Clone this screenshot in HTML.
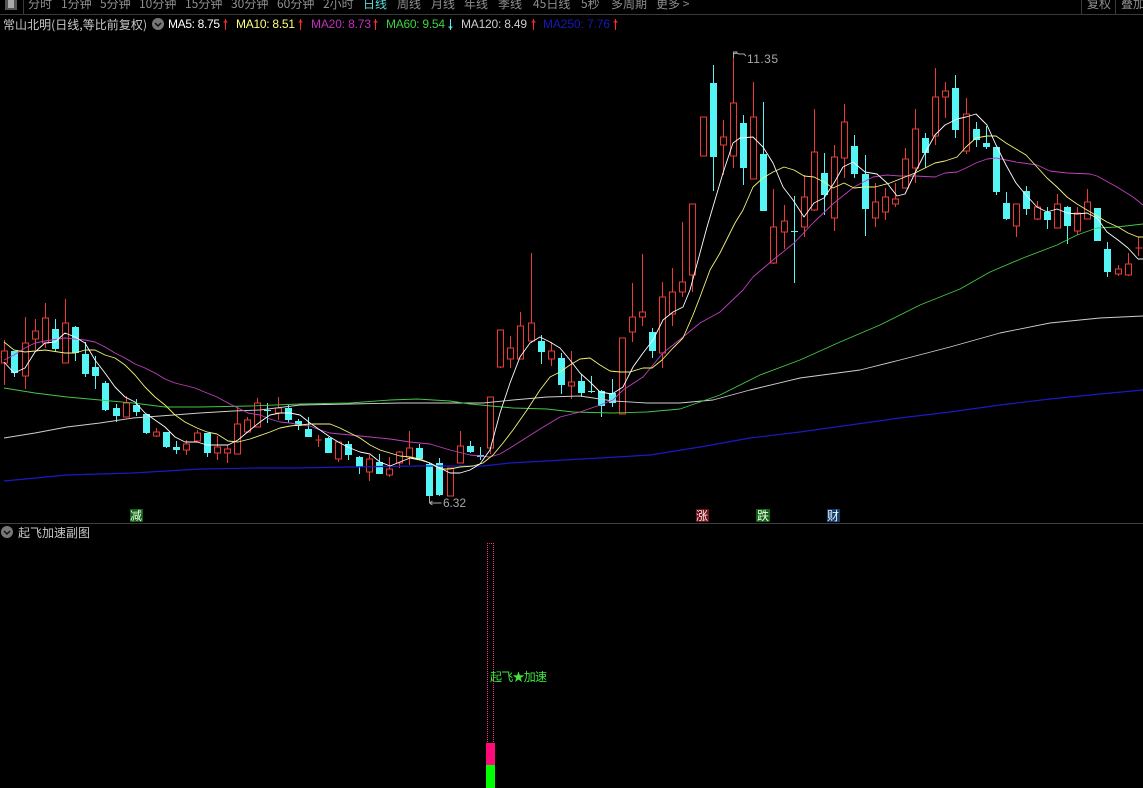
<!DOCTYPE html>
<html><head><meta charset="utf-8"><style>
html,body{margin:0;padding:0;background:#000;width:1143px;height:788px;overflow:hidden}
svg{display:block;position:absolute;left:0;top:0}
text{font-family:"Liberation Sans","WenQuanYi Zen Hei","Noto Sans CJK SC",sans-serif;font-size:12px}
.t{fill:#8f8f8f}
.z{font-family:"WenQuanYi Zen Hei","Noto Sans CJK SC",sans-serif}
</style></head><body>
<svg width="1143" height="788" viewBox="0 0 1143 788">
<rect width="1143" height="788" fill="#000"/>
<!-- top bar -->
<g shape-rendering="crispEdges">
<rect x="0" y="14" width="1143" height="1" fill="#3a3a3a"/>
<rect x="23" y="0" width="1" height="14" fill="#3a3a3a"/>
<rect x="1081" y="0" width="1" height="14" fill="#3a3a3a"/>
<rect x="1115" y="0" width="1" height="14" fill="#3a3a3a"/>
<rect x="5" y="0" width="12" height="10" fill="#555"/>
<rect x="8" y="0" width="6" height="8" fill="#aaa"/>
<rect x="0" y="523" width="1143" height="1" fill="#3f3f3f"/>
</g>
<g class="z">
<text class="t z" x="28" y="8">分时</text>
<text class="t z" x="61" y="8">1分钟</text>
<text class="t z" x="100" y="8">5分钟</text>
<text class="t z" x="139" y="8">10分钟</text>
<text class="t z" x="185" y="8">15分钟</text>
<text class="t z" x="231" y="8">30分钟</text>
<text class="t z" x="277" y="8">60分钟</text>
<text class="t z" x="323" y="8">2小时</text>
<text class="z" x="363" y="8" fill="#5fd8d8">日线</text>
<text class="t z" x="397" y="8">周线</text>
<text class="t z" x="431" y="8">月线</text>
<text class="t z" x="464" y="8">年线</text>
<text class="t z" x="498" y="8">季线</text>
<text class="t z" x="533" y="8">45日线</text>
<text class="t z" x="581" y="8">5秒</text>
<text class="t z" x="611" y="8">多周期</text>
<text class="t z" x="656" y="8">更多 &gt;</text>
<text class="t z" x="1087" y="8">复权</text>
<text class="t z" x="1121" y="8">叠加</text>
</g>
<!-- legend -->
<text class="z" x="3" y="29" fill="#c8c8c8" textLength="144">常山北明(日线,等比前复权)</text>
<circle cx="158" cy="24" r="6" fill="#777"/>
<path d="M155 23l3 3 3-3" fill="none" stroke="#111" stroke-width="1.5"/>
<text x="168" y="28" fill="#fff" textLength="52">MA5: 8.75</text>
<text x="236" y="28" fill="#ffff80" textLength="59">MA10: 8.51</text>
<text x="311" y="28" fill="#c030c0" textLength="60">MA20: 8.73</text>
<text x="386" y="28" fill="#40d040" textLength="59">MA60: 9.54</text>
<text x="461" y="28" fill="#cccccc" textLength="66">MA120: 8.49</text>
<text x="543" y="28" fill="#1818b8" textLength="67">MA250: 7.76</text>
<g fill="none" stroke-width="1" shape-rendering="crispEdges">
<path stroke="#ff2c2c" d="M225.500 19V30M223.500 22h4M224.500 21h2M300.500 19V30M298.500 22h4M299.500 21h2M375.500 19V30M373.500 22h4M374.500 21h2M533.500 19V30M531.500 22h4M532.500 21h2M615.500 19V30M613.500 22h4M614.500 21h2"/>
<path stroke="#60f0f0" d="M450.500 19V30M448.500 27h4M449.500 28h2"/>
</g>
<!-- candles -->
<g shape-rendering="crispEdges" fill="none" stroke-width="1">
<path stroke="#ee3a36" d="M4.500 340V351M4.500 363V385M1.500 351h6v12h-6zM25.500 317V343M25.500 376V389M22.500 343h6v33h-6zM35.500 319V331M35.500 339V350M32.500 331h6v8h-6zM45.500 303V318M45.500 343V348M42.500 318h6v25h-6zM65.500 299V323M62.500 323h6v40h-6zM126.500 396V403M123.500 403h6v14h-6zM156.500 428V432M156.500 436V437M153.500 432h6v4h-6zM186.500 440V444M186.500 450V455M183.500 444h6v6h-6zM197.500 430V433M197.500 441V442M194.500 433h6v8h-6zM217.500 436V447M217.500 453V460M214.500 447h6v6h-6zM227.500 445V449M227.500 453V463M224.500 449h6v4h-6zM237.500 407V424M234.500 424h6v30h-6zM247.500 417V420M247.500 432V433M244.500 420h6v12h-6zM257.500 398V403M254.500 403h6v24h-6zM278.500 397V408M278.500 413V420M275.500 408h6v5h-6zM338.500 459V462M335.500 442h6v17h-6zM369.500 455V459M369.500 472V481M366.500 459h6v13h-6zM389.500 457V469M389.500 475V477M386.500 469h6v6h-6zM399.500 451V452M399.500 463V468M396.500 452h6v11h-6zM409.500 431V448M409.500 457V465M406.500 448h6v9h-6zM447.500 468h6v28h-6zM460.500 431V446M457.500 446h6v17h-6zM490.500 448V454M487.500 397h6v51h-6zM500.500 367V368M497.500 330h6v37h-6zM510.500 336V348M510.500 359V368M507.500 348h6v11h-6zM520.500 312V326M517.500 326h6v33h-6zM531.500 253V323M531.500 341V343M528.500 323h6v18h-6zM551.500 342V351M551.500 359V366M548.500 351h6v8h-6zM571.500 351V382M571.500 386V399M568.500 382h6v4h-6zM619.500 338h6v76h-6zM632.500 283V317M632.500 332V342M629.500 317h6v15h-6zM642.500 254V312M642.500 317V326M639.500 312h6v5h-6zM662.500 282V297M662.500 353V368M659.500 297h6v56h-6zM672.500 268V292M672.500 314V326M669.500 292h6v22h-6zM682.500 222V282M682.500 292V297M679.500 282h6v10h-6zM692.500 275V292M689.500 204h6v71h-6zM700.500 117h6v39h-6zM723.500 120V137M723.500 145V175M720.500 137h6v8h-6zM733.500 53V103M733.500 156V168M730.500 103h6v53h-6zM753.500 82V117M750.500 117h6v62h-6zM773.500 189V227M773.500 263V264M770.500 227h6v36h-6zM784.500 205V221M784.500 232V249M781.500 221h6v11h-6zM804.500 175V197M804.500 227V237M801.500 197h6v30h-6zM814.500 109V152M814.500 210V211M811.500 152h6v58h-6zM834.500 145V157M834.500 218V231M831.500 157h6v61h-6zM844.500 104V122M844.500 158V178M841.500 122h6v36h-6zM875.500 183V202M875.500 218V227M872.500 202h6v16h-6zM885.500 188V197M885.500 212V220M882.500 197h6v15h-6zM895.500 183V199M895.500 204V207M892.500 199h6v5h-6zM905.500 148V159M902.500 159h6v29h-6zM915.500 109V129M915.500 168V183M912.500 129h6v39h-6zM935.500 68V97M935.500 136V145M932.500 97h6v39h-6zM945.500 82V91M945.500 97V118M942.500 91h6v6h-6zM966.500 98V114M966.500 151V154M963.500 114h6v37h-6zM1016.500 226V237M1013.500 204h6v22h-6zM1037.500 201V207M1037.500 219V220M1034.500 207h6v12h-6zM1057.500 194V204M1054.500 204h6v24h-6zM1077.500 207V213M1077.500 231V235M1074.500 213h6v18h-6zM1087.500 189V202M1084.500 202h6v17h-6zM1118.500 265V269M1118.500 274V276M1115.500 269h6v5h-6zM1128.500 253V264M1128.500 275V276M1125.500 264h6v11h-6zM1138.500 237V256M1135.500 248h7M318.500 435V447M315.500 440h6"/>
<path stroke="#55f5f5" d="M14.500 373V377M55.500 319V329M55.500 349V351M75.500 326V327M75.500 353V361M85.500 342V354M85.500 374V377M95.500 356V367M95.500 376V389M105.500 381V383M105.500 410V411M116.500 404V408M116.500 416V422M136.500 399V405M136.500 412V416M146.500 433V434M166.500 447V448M176.500 441V447M176.500 450V454M207.500 453V457M288.500 405V408M288.500 420V423M298.500 419V421M298.500 426V430M308.500 417V429M328.500 437V438M348.500 441V444M348.500 455V460M359.500 456V457M359.500 467V474M379.500 454V462M419.500 444V448M419.500 459V460M429.500 463V464M429.500 496V500M439.500 458V463M439.500 495V496M470.500 441V446M470.500 452V453M541.500 335V341M541.500 352V364M561.500 353V358M561.500 385V394M581.500 374V381M581.500 393V397M601.500 390V391M601.500 406V417M612.500 379V393M612.500 403V407M652.500 328V332M652.500 351V358M713.500 65V83M713.500 157V191M743.500 115V123M743.500 168V185M763.500 102V154M824.500 153V173M824.500 195V215M854.500 135V146M854.500 174V178M865.500 155V174M865.500 209V236M925.500 133V138M925.500 153V168M955.500 75V88M955.500 130V138M976.500 122V129M976.500 140V147M986.500 126V143M986.500 147V149M996.500 192V195M1006.500 192V203M1006.500 219V220M1026.500 186V191M1026.500 209V215M1047.500 207V212M1047.500 220V229M1067.500 206V207M1067.500 226V244M1107.500 242V249M1107.500 272V277M267.500 403V423M264 410.500h7M480.500 447V460M591.500 376V393M588 391.500h7M794.500 196V283M791 231.500h7"/>
<path stroke="none" fill="#55f5f5" d="M11 351h7v22h-7zM52 329h7v20h-7zM72 327h7v26h-7zM82 354h7v20h-7zM92 367h7v9h-7zM102 383h7v27h-7zM113 408h7v8h-7zM133 405h7v7h-7zM143 414h7v19h-7zM163 432h7v15h-7zM173 447h7v3h-7zM204 433h7v20h-7zM285 408h7v12h-7zM295 421h7v5h-7zM305 429h7v8h-7zM325 438h7v15h-7zM345 444h7v11h-7zM356 457h7v10h-7zM376 462h7v12h-7zM416 448h7v11h-7zM426 464h7v32h-7zM436 463h7v32h-7zM467 446h7v6h-7zM477 455h7v2h-7zM538 341h7v11h-7zM558 358h7v27h-7zM578 381h7v12h-7zM598 391h7v15h-7zM609 393h7v10h-7zM649 332h7v19h-7zM710 83h7v74h-7zM740 123h7v45h-7zM760 154h7v57h-7zM821 173h7v22h-7zM851 146h7v28h-7zM862 174h7v35h-7zM922 138h7v15h-7zM952 88h7v42h-7zM973 129h7v11h-7zM983 143h7v4h-7zM993 147h7v45h-7zM1003 203h7v16h-7zM1023 191h7v18h-7zM1044 212h7v8h-7zM1064 207h7v19h-7zM1094 208h7v33h-7zM1104 249h7v23h-7z"/>
</g>
<!-- moving averages -->
<g fill="none" stroke-width="0.9" stroke-linejoin="round">
<polyline stroke="#1a1ac4" stroke-width="1.2" points="4,481 67,475 133,473 200,469 260,468 293,468 350,467 417,466 483,466 510,463 600,458 650,455 700,447 750,438 800,432 850,425 900,418 950,412 1000,405 1050,399 1100,394 1143,390"/>
<polyline stroke="#cfcfcf" points="4,438 35,433 67,427 100,423 133,418 160,416 200,413 233,411 260,410 300,405 350,404 400,403 450,403 483,403 513,400 547,397 580,396 613,401 647,403 680,403 713,400 750,390 800,378 860,370 900,360 950,347 1000,333 1050,323 1100,318 1143,316"/>
<polyline stroke="#45c845" points="4,388 35,393 67,397 100,400 133,403 165,407 200,407 250,406 300,404 350,403 390,400 417,399 450,401 470,404 513,408 547,409 573,412 613,413 647,412 680,409 700,402 720,395 760,375 800,360 840,342 880,325 920,305 960,289 990,272 1023,258 1057,245 1077,235 1097,228 1117,227 1143,224"/>
<polyline stroke="#c040c0" points="4,360 14,355 25,348 35,343 45,341 65,338 85,340 95,342 105,347 115,353 125,358 135,364 145,368 155,373 165,379 175,383 195,388 207,393 217,397 228,403 238,408 248,413 260,415 270,419 280,422 290,423 300,425 310,426 320,430 330,433 350,435 370,437 390,439 410,442 430,444 450,450 470,455 490,457 500,454 510,448 540,429 560,417 580,412 600,405 613,400 623,390 643,377 663,353 683,337 700,323 720,312 743,290 753,277 773,260 794,243 814,222 834,203 854,187 873,177 887,175 900,176 915,176 935,177 945,173 957,172 966,168 976,163 987,159 996,158 1016,162 1037,165 1050,171 1067,173 1090,174 1097,176 1117,187 1133,197 1143,205"/>
<polyline stroke="#f4f478" points="4,342 14,350 25,352 45,350 65,353 75,353 85,350 95,350 105,355 115,358 125,365 135,375 145,387 155,397 165,405 175,415 185,422 197,428 207,432 217,434 228,441 238,442 250,439 270,432 280,428 290,426 310,424 330,424 340,428 350,433 360,438 370,445 380,450 390,453 400,456 410,457 420,459 430,463 440,469 450,469 460,467 473,466 483,463 493,455 503,443 513,430 527,410 540,390 550,377 560,372 570,365 580,359 590,358 600,365 610,371 620,372 630,372 643,368 652,368 662,360 673,348 683,338 693,315 700,297 710,270 720,253 735,223 743,210 753,187 763,178 773,172 784,167 794,170 804,176 814,177 824,182 833,188 844,183 854,188 865,187 875,187 890,183 905,177 915,173 925,168 935,163 945,161 957,157 966,147 976,138 987,136 996,136 1006,143 1016,149 1026,155 1037,167 1047,178 1057,187 1067,197 1077,204 1087,210 1097,216 1107,222 1118,227 1128,233 1138,237 1143,237"/>
<polyline stroke="#ffffff" points="4,362 14,373 25,368 35,352 45,343 55,342 65,333 75,337 85,343 95,360 105,373 115,387 125,397 135,402 145,413 155,420 165,427 175,437 185,442 197,442 207,445 217,445 228,445 238,440 250,430 260,422 270,415 280,413 290,413 300,415 310,423 320,430 330,437 340,443 350,448 360,452 370,454 380,462 390,466 400,462 410,458 420,460 430,463 440,468 450,473 460,473 470,470 480,464 490,450 500,413 510,383 520,357 530,343 540,337 550,342 560,348 570,360 580,373 590,382 600,392 612,394 623,387 633,367 643,353 653,340 663,320 673,312 683,307 690,290 707,227 723,173 733,143 740,138 753,137 763,147 773,163 783,187 793,200 804,217 814,203 824,198 834,183 843,167 853,162 865,172 877,174 887,183 897,196 905,194 915,173 925,153 935,135 945,125 957,119 966,117 976,114 987,125 996,145 1006,165 1016,183 1026,195 1037,207 1047,212 1057,209 1067,213 1077,214 1087,213 1097,218 1107,232 1118,240 1128,248 1138,259 1143,259"/>
</g>
<!-- price labels -->
<path d="M733.500 58V52h4M733.500 54l3-1M736 53l3 1h5l2 2" fill="none" stroke="#aaa" stroke-width="1"/>
<text x="747" y="63" fill="#a8a8a8" textLength="31">11.35</text>
<path d="M429.500 496V503M429.500 503h12M429.500 503l3-2M429.500 503l3 2" fill="none" stroke="#aaa" stroke-width="1"/>
<text x="443" y="507" fill="#a8a8a8" textLength="23">6.32</text>
<!-- markers -->
<g shape-rendering="crispEdges">
<rect x="130" y="509" width="13" height="13" fill="#146014"/>
<rect x="696" y="509" width="13" height="13" fill="#6a1018"/>
<rect x="756" y="509" width="14" height="13" fill="#146014"/>
<rect x="827" y="509" width="13" height="13" fill="#143a66"/>
</g>
<text class="z" x="130" y="520" fill="#e8ffe8">减</text>
<text class="z" x="696" y="520" fill="#ffe8e8">涨</text>
<text class="z" x="757" y="520" fill="#e8ffe8">跌</text>
<text class="z" x="827" y="520" fill="#e8f4ff">财</text>
<!-- sub chart -->
<circle cx="7" cy="532" r="6" fill="#777"/>
<path d="M4 531l3 3 3-3" fill="none" stroke="#111" stroke-width="1.5"/>
<text class="z" x="18" y="537" fill="#c8c8c8" textLength="72">起飞加速副图</text>
<g shape-rendering="crispEdges">
<path d="M487.500 543V743M493.500 543V743M487 543.500h7" fill="none" stroke="#ff2a80" stroke-dasharray="1 1"/>
<rect x="486" y="743" width="9" height="22" fill="#ff0a78"/>
<rect x="486" y="765" width="9" height="23" fill="#00ff00"/>
</g>
<text class="z" x="490" y="681" fill="#3ee83e" textLength="57">起飞★加速</text>
</svg>
</body></html>
